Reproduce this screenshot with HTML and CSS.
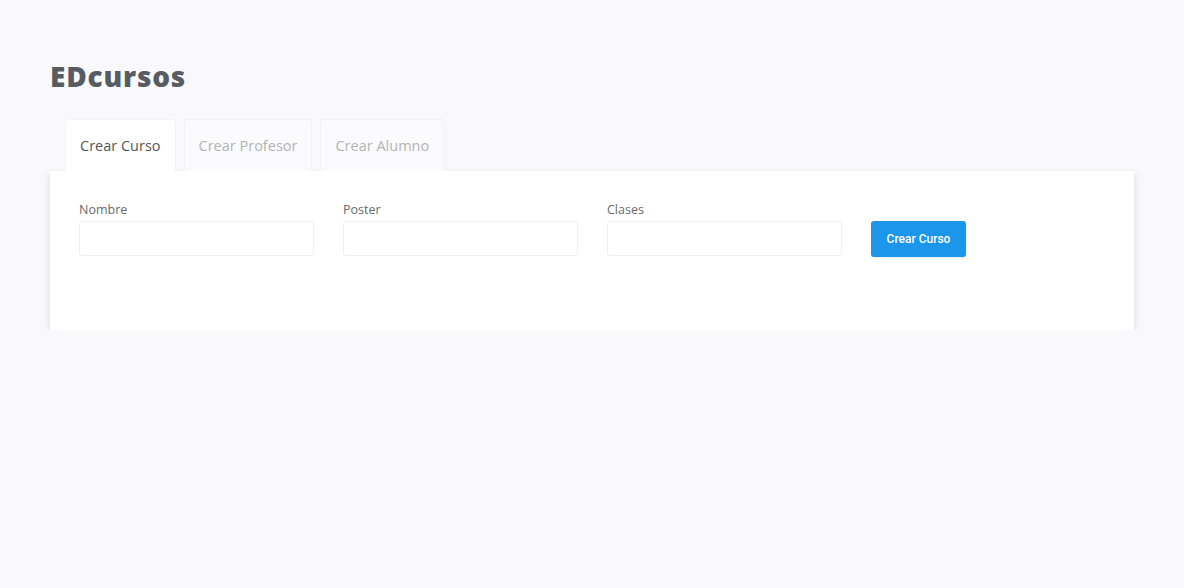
FILE: index.html
```html
<!DOCTYPE html>
<html lang="es">
<head>
<meta charset="utf-8">
<title>EDcursos</title>
<link rel="stylesheet" href="styles.css">
</head>
<body>
<div class="container">
  <h1 class="title">EDcursos</h1>
  <div class="tabs">
    <div class="tab active">Crear Curso</div>
    <div class="tab">Crear Profesor</div>
    <div class="tab">Crear Alumno</div>
  </div>
  <div class="panel">
    <form class="form">
      <div class="field">
        <label class="label">Nombre</label>
        <input class="input" type="text">
      </div>
      <div class="field">
        <label class="label">Poster</label>
        <input class="input" type="text">
      </div>
      <div class="field">
        <label class="label">Clases</label>
        <input class="input" type="text">
      </div>
      <button class="btn" type="button">Crear Curso</button>
    </form>
  </div>
</div>
</body>
</html>
```
FILE: styles.css
```css
* { box-sizing: border-box; }
html, body { margin: 0; padding: 0; }
body {
  background: #f9f9fc;
  font-family: "Open Sans", "Liberation Sans", sans-serif;
  color: #555;
}
.container {
  margin: 0 50px;
  padding-top: 57px;
}
.title {
  margin: 0 0 24px 0;
  font-family: "Open Sans", sans-serif;
  font-weight: 800;
  font-size: 28px;
  line-height: 38px;
  color: #575c62;
  letter-spacing: 0.8px;
}
.tabs {
  display: flex;
  gap: 8px;
  padding-left: 15px;
}
.tab {
  height: 52px;
  padding: 0 14px;
  display: flex;
  align-items: center;
  font-size: 14.5px;
  color: #b3b3b3;
  background: #fbfbfd;
  border: 1px solid #f2f2f5;
  border-bottom: none;
  border-radius: 3px 3px 0 0;
}
.tab.active {
  background: #fff;
  color: #555;
  border-color: #f4f4f6;
}
.panel {
  background: #fff;
  height: 159px;
  box-shadow: 0 3px 7px rgba(0,0,0,0.13);
  padding: 30px 29px 0 29px;
}
.form {
  display: flex;
  align-items: flex-end;
  gap: 29px;
}
.field {
  display: flex;
  flex-direction: column;
  width: 235px;
}
.label {
  font-size: 12.5px;
  color: #6a6a6a;
  line-height: 18px;
  margin-bottom: 2px;
}
.input {
  height: 35px;
  border: 1px solid #f0f0f2;
  border-radius: 3px;
  background: #fff;
  outline: none;
}
.btn {
  width: 95px;
  height: 36px;
  margin-bottom: -1px;
  background: #1b96ea;
  color: #fff;
  border: none;
  border-radius: 3px;
  font-family: Roboto, "Liberation Sans", sans-serif;
  font-weight: 500;
  font-size: 12px;
  box-shadow: 0 1px 2px rgba(0,0,0,0.08);
}
```
